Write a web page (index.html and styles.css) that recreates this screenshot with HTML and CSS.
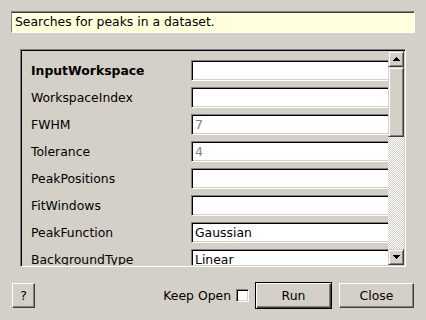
FILE: index.html
```html
<!DOCTYPE html>
<html>
	<head>
		<meta charset="utf-8" />
		<title>FindPeaks</title>
		<link rel="stylesheet" href="styles.css">
	</head>
	<body>
		<div class="dialog">
			<div class="summary">Searches for peaks in a dataset.</div>

			<div class="props-frame">
				<div class="props-view">
					<div class="prop-row">
						<div class="prop-label mandatory">InputWorkspace</div>
						<div class="field"></div>
					</div>
					<div class="prop-row">
						<div class="prop-label">WorkspaceIndex</div>
						<div class="field"></div>
					</div>
					<div class="prop-row">
						<div class="prop-label">FWHM</div>
						<div class="field default">7</div>
					</div>
					<div class="prop-row">
						<div class="prop-label">Tolerance</div>
						<div class="field default">4</div>
					</div>
					<div class="prop-row">
						<div class="prop-label">PeakPositions</div>
						<div class="field"></div>
					</div>
					<div class="prop-row">
						<div class="prop-label">FitWindows</div>
						<div class="field"></div>
					</div>
					<div class="prop-row">
						<div class="prop-label">PeakFunction</div>
						<div class="field">Gaussian</div>
					</div>
					<div class="prop-row">
						<div class="prop-label">BackgroundType</div>
						<div class="field">Linear</div>
					</div>
				</div>

				<!-- vertical scrollbar -->
				<div class="vscroll">
					<div class="sb-button">
						<svg width="7" height="4" viewBox="0 0 7 4"><path d="M3 0h1v1h1v1h1v1h1v1H0V3h1V2h1V1h1z" fill="#000"/></svg>
					</div>
					<div class="sb-thumb"></div>
					<div class="sb-track"></div>
					<div class="sb-button">
						<svg width="7" height="4" viewBox="0 0 7 4"><path d="M0 0h7v1H6v1H5v1H4v1H3V3H2V2H1V1H0z" fill="#000"/></svg>
					</div>
				</div>
			</div>

			<div class="button-row">
				<button class="btn help-btn">?</button>
				<label class="keep-open">Keep Open <span class="checkbox"></span></label>
				<button class="btn run-btn">Run</button>
				<button class="btn close-btn">Close</button>
			</div>
		</div>
	</body>
</html>
```

FILE: styles.css
```css
body {
	margin: 0;
	width: 426px;
	height: 320px;
	overflow: hidden;
	background-color: #d4d0c8;
	font-family: "DejaVu Sans", sans-serif;
	font-size: 12.4px;
	color: #000;
}

.dialog {
	padding: 11px 11px 0 11px;
}

.summary {
	box-sizing: border-box;
	height: 22px;
	padding-left: 3px;
	line-height: 20px;
	background-color: #ffffdc;
	border: 1px solid;
	border-color: #808080 #fff #fff #808080;
	box-shadow: inset 0 1px 0 #404040;
}

/* sunken frame round the property list */
.props-frame {
	box-sizing: border-box;
	display: flex;
	width: 386px;
	height: 218px;
	margin: 16px 0 0 9px;
	padding: 1px;
	border: 1px solid;
	border-color: #808080 #fff #fff #808080;
	box-shadow: inset 1px 1px 0 #000, inset -1px -1px 0 #d4d0c8;
}

.props-view {
	box-sizing: border-box;
	width: 366px;
	overflow: hidden;
	padding: 9px 0 0 9px;
	display: flex;
	flex-direction: column;
	gap: 6px;
}

.prop-row {
	display: flex;
	align-items: center;
	height: 21px;
	flex-shrink: 0;
}

.prop-label {
	width: 160px;
	flex-shrink: 0;
	white-space: nowrap;
}

.mandatory {
	font-weight: bold;
}

.field {
	box-sizing: border-box;
	flex-shrink: 0;
	width: 200px;
	height: 21px;
	padding: 1px 1px 1px 3px;
	line-height: 17px;
	background-color: #fff;
	border: 1px solid;
	border-color: #808080 #fff #fff #808080;
	box-shadow: inset 1px 1px 0 #000, inset -1px -1px 0 #d4d0c8;
}

.default {
	color: #808080;
}

.vscroll {
	width: 16px;
	display: flex;
	flex-direction: column;
}

.sb-button,
.sb-thumb {
	box-sizing: border-box;
	background-color: #d4d0c8;
	border: 1px solid;
	border-color: #d4d0c8 #404040 #404040 #d4d0c8;
	box-shadow: inset 1px 1px 0 #fff, inset -1px -1px 0 #808080;
}

.sb-button {
	height: 16px;
	display: flex;
	align-items: center;
	justify-content: center;
}

.sb-button svg {
	display: block;
}

.sb-thumb {
	height: 70px;
}

.sb-track {
	flex: 1;
	background: repeating-conic-gradient(#fff 0 25%, #d4d0c8 0 50%) 0 0 / 2px 2px;
}

.button-row {
	display: flex;
	align-items: center;
	height: 27px;
	margin: 15px 1px 0 1px;
}

.btn {
	box-sizing: border-box;
	margin: 0;
	padding: 0;
	font-family: "DejaVu Sans", sans-serif;
	font-size: 12.4px;
	color: #000;
	background-color: #d4d0c8;
	border: 1px solid;
	border-color: #fff #404040 #404040 #fff;
	box-shadow: inset -1px -1px 0 #808080;
}

.help-btn {
	width: 23px;
	height: 25px;
}

.keep-open {
	margin-left: auto;
	display: flex;
	align-items: center;
	white-space: nowrap;
}

.checkbox {
	box-sizing: border-box;
	width: 13px;
	height: 13px;
	margin: 0 6px 0 5px;
	background-color: #fff;
	border: 1px solid;
	border-color: #808080 #fff #fff #808080;
	box-shadow: inset 1px 1px 0 #000, inset -1px -1px 0 #d4d0c8;
}

.run-btn {
	width: 77px;
	height: 27px;
	border: 1px solid #000;
	box-shadow: inset 1px 1px 0 #fff, inset -1px -1px 0 #404040, inset -2px -2px 0 #808080;
}

.close-btn {
	width: 75px;
	height: 25px;
	margin-left: 7px;
}
```
